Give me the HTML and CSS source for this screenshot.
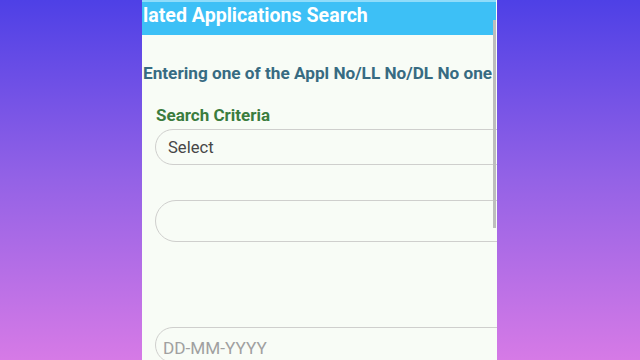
FILE: index.html
```html
<!DOCTYPE html>
<html>
<head>
<meta charset="utf-8">
<link rel="stylesheet" href="styles.css">
</head>
<body>
<div class="stage">
  <div class="phone">
    <div class="appbar"><span class="title">lated Applications Search</span></div>
    <div class="content">
      <p class="hint">Entering one of the Appl No/LL No/DL No one</p>
      <div class="label">Search Criteria</div>
      <div class="field"><span class="value">Select</span></div>
      <div class="field field-second"></div>
      <div class="field field-date"><span class="placeholder">DD-MM-YYYY</span></div>
    </div>
    <div class="scrollbar"></div>
  </div>
</div>
</body>
</html>
```
FILE: styles.css
```css
html, body {
  margin: 0;
  padding: 0;
  width: 640px;
  height: 360px;
  overflow: hidden;
}
body {
  background: linear-gradient(180deg, #4e40e6 0%, #9462e6 50%, #d67ae6 100%);
  font-family: Roboto, "Noto Sans", sans-serif;
}
.stage {
  display: flex;
  height: 360px;
  padding-left: 142px;
}
.phone {
  position: relative;
  width: 355px;
  height: 360px;
  background: #f8fcf6;
  overflow: hidden;
}
.appbar {
  height: 35px;
  background: #3dc0f6;
  border-top: 2px solid #8fdcfa;
  box-sizing: border-box;
  display: flex;
  align-items: center;
  padding-bottom: 6px;
  width: 354px;
}
.title {
  color: #ffffff;
  font-weight: bold;
  font-size: 19.6px;
  padding-left: 1px;
  white-space: nowrap;
}
.content {
  display: flex;
  flex-direction: column;
}
.hint {
  margin: 28px 0 0 0;
  padding-left: 1px;
  color: #376b82;
  font-weight: bold;
  font-size: 17.2px;
  white-space: nowrap;
  line-height: 20px;
}
.label {
  margin: 22px 0 0 14px;
  color: #3b7c3e;
  font-weight: bold;
  font-size: 17px;
  line-height: 20px;
}
.field {
  margin: 4px 0 0 13px;
  width: 380px;
  height: 36px;
  border: 1.5px solid #cfcfcd;
  border-radius: 20px;
  box-sizing: border-box;
  display: flex;
  align-items: center;
  flex-shrink: 0;
}
.field-second {
  margin-top: 35px;
  height: 42px;
  border-radius: 22px;
}
.field-date {
  margin-top: 85px;
}
.value {
  padding-left: 12px;
  color: #474747;
  font-size: 16.6px;
}
.placeholder {
  padding-left: 7px;
  color: #a0a0a0;
  font-size: 17.2px;
  margin-top: 6px;
}
.scrollbar {
  position: absolute;
  right: 1px;
  top: 20px;
  width: 3px;
  height: 208px;
  background: #bdbdbd;
}
```
